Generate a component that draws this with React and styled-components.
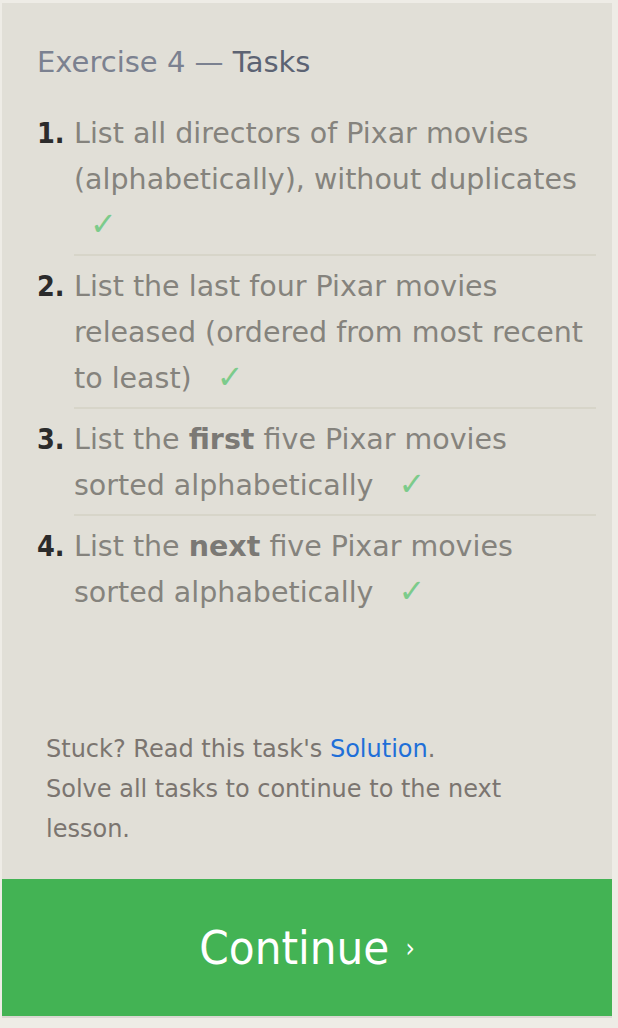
import styled, { createGlobalStyle } from 'styled-components';

const GlobalStyle = createGlobalStyle`
  html, body {
    margin: 0;
    padding: 0;
    background: #eeece6;
  }
  body {
    font-family: 'DejaVu Sans', sans-serif;
  }
`;

const Panel = styled.div`
  box-sizing: border-box;
  margin: 3px 6px 0 2px;
  height: 1015px;
  background: #e1dfd7;
  display: flex;
  flex-direction: column;
  border-bottom: 2px solid #dad8d2;
`;

const Body = styled.div`
  flex: 1;
  display: flex;
  flex-direction: column;
  padding: 40px 16px 0 35px;
`;

const Title = styled.h2`
  margin: 0 0 30px;
  font-size: 29px;
  line-height: 38px;
  font-weight: normal;
  color: #7b8190;

  > b {
    font-weight: normal;
    color: #5c6373;
  }
`;

const TaskList = styled.ol`
  list-style: none;
  margin: 0;
  padding: 0;
`;

const Task = styled.li`
  display: flex;
  font-size: 28.5px;
  line-height: 46px;
`;

const Num = styled.span`
  width: 37px;
  flex: none;
  color: #2b2b2b;
  font-family: 'DejaVu Sans Condensed', 'DejaVu Sans', sans-serif;
  font-weight: bold;
`;

const TaskText = styled.div`
  flex: 1;
  color: #85837d;
  padding: 0 0 5px;
  margin-bottom: 8px;
  border-bottom: ${(p) => (p.last ? 'none' : '2px solid #d7d5c9')};

  > b {
    color: #7b7975;
  }
`;

const Check = styled.span`
  color: #7ccb8b;
  margin-left: 16px;
  font-size: 32px;
  line-height: 0;
`;

const Footer = styled.div`
  margin-top: auto;
  padding: 0 40px 30px 9px;
  font-size: 24px;
  line-height: 40px;
  color: #7b7570;

  > a {
    color: #1f6fd8;
    text-decoration: none;
  }
`;

const ContinueButton = styled.button`
  flex: none;
  height: 137px;
  border: none;
  background: #43b354;
  color: #ffffff;
  font-family: 'DejaVu Sans Condensed', 'DejaVu Sans', sans-serif;
  font-size: 47px;
  display: flex;
  align-items: center;
  justify-content: center;
  gap: 16px;
  cursor: pointer;

  > span {
    font-size: 26px;
  }
`;

const tasks = [
  <>List all directors of Pixar movies (alphabetically), without duplicates</>,
  <>List the last four Pixar movies released (ordered from most recent to least)</>,
  <>List the <b>first</b> five Pixar movies sorted alphabetically</>,
  <>List the <b>next</b> five Pixar movies sorted alphabetically</>,
];

export default function App() {
  return (
    <>
      <GlobalStyle />
      <Panel>
        <Body>
          <Title>
            Exercise 4 — <b>Tasks</b>
          </Title>
          <TaskList>
            {tasks.map((t, i) => (
              <Task key={i}>
                <Num>{i + 1}.</Num>
                <TaskText last={i === tasks.length - 1}>
                  {t} <Check>✓</Check>
                </TaskText>
              </Task>
            ))}
          </TaskList>
          <Footer>
            Stuck? Read this task's <a href="#">Solution</a>.
            <br />
            Solve all tasks to continue to the next lesson.
          </Footer>
        </Body>
        <ContinueButton>
          Continue <span>›</span>
        </ContinueButton>
      </Panel>
    </>
  );
}
